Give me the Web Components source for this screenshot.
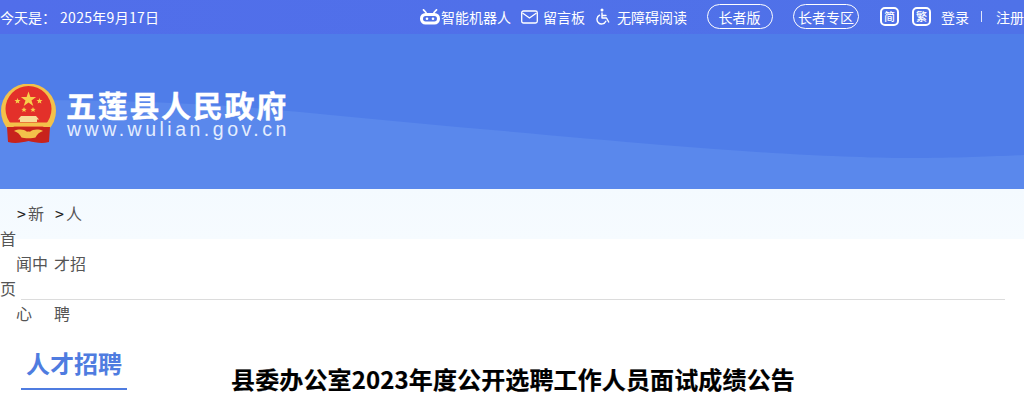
<!DOCTYPE html>
<html lang="zh-CN">
<head>
<meta charset="utf-8">
<title>县委办公室2023年度公开选聘工作人员面试成绩公告</title>
<style>
  html, body { margin: 0; padding: 0; height: 400px; overflow: hidden; background: #fff; }
  body { font-family: "Noto Sans CJK SC", "Noto Sans", sans-serif; }
</style>
</head>
<body>
<site-topbar></site-topbar>
<site-banner></site-banner>
<bread-crumbs></bread-crumbs>
<article-head></article-head>

<script>
class SiteTopbar extends HTMLElement {
  constructor() {
    super();
    this.attachShadow({mode: 'open'}).innerHTML = `
      <style>
        :host { display: flex; align-items: center; box-sizing: border-box; height: 34px; padding-bottom: 1px; background: linear-gradient(90deg, #516eea, #4f72e8); color: #fff; font-size: 14px; white-space: nowrap; overflow: hidden; }
        .date { flex: 1; }
        .date span { margin-left: 4px; letter-spacing: .3px; }
        .item { display: flex; align-items: center; }
        .robot { margin-right: 10px; }
        .mail { margin-right: 10px; }
        .access { margin-right: 20px; }
        .pill { box-sizing: border-box; height: 25px; border: 1px solid #fff; border-radius: 13px; display: flex; align-items: center; justify-content: center; width: 66px; margin-right: 20px; padding-right: 1px; }
        .pill + .pill { margin-right: 21px; padding-right: 0; }
        .tag { box-sizing: border-box; width: 19px; height: 19px; border: 2px solid #fff; border-radius: 5px; font-size: 11px; line-height: 11px; font-weight: 500; display: flex; align-items: center; justify-content: center; margin-right: 13px; }
        .tag.last { margin-right: 10px; }
        .sep { width: 1px; height: 11px; background: #dfe6fb; margin: 0 14px 0 12px; }
        svg { display: block; fill: none; stroke: #fff; }
      </style>
      <div class="date">今天是：<span>2025年9月17日</span></div>
      <div class="item robot">
        <svg width="22" height="16" viewBox="0 0 22 16" style="margin-right:0">
          <path d="M7 3.5 4.5 .8M15 3.5 17.5 .8" stroke-width="1.7" stroke-linecap="round"/>
          <rect x="1" y="4" width="20" height="11.5" rx="5.5" fill="#fff" stroke="none"/>
          <rect x="4" y="7" width="14" height="5.5" rx="2.7" fill="#4f70e8" stroke="none"/>
          <circle cx="8" cy="9.7" r="1.3" fill="#fff" stroke="none"/>
          <circle cx="14" cy="9.7" r="1.3" fill="#fff" stroke="none"/>
        </svg>智能机器人
      </div>
      <div class="item mail">
        <svg width="17" height="14" viewBox="0 0 17 14" style="margin-right:5px">
          <rect x=".7" y="1" width="15.6" height="12" rx="1.8" stroke-width="1.3"/>
          <path d="M1.5 3 8.5 8 15.5 3" stroke-width="1.3"/>
        </svg>留言板
      </div>
      <div class="item access">
        <svg width="16" height="17" viewBox="0 0 16 17" style="margin-right:6px">
          <circle cx="7" cy="2" r="1.5" fill="#fff" stroke="none"/>
          <path d="M7 5v5h4.5l2.2 4M7 7.5h4" stroke-width="1.4" stroke-linecap="round" stroke-linejoin="round"/>
          <path d="M4.6 7.2A4.6 4.6 0 1 0 10.8 13.2" stroke-width="1.4" stroke-linecap="round"/>
        </svg>无障碍阅读
      </div>
      <div class="pill">长者版</div>
      <div class="pill">长者专区</div>
      <div class="tag">简</div>
      <div class="tag last">繁</div>
      <div>登录</div>
      <div class="sep"></div>
      <div>注册</div>
    `;
  }
}

class SiteBanner extends HTMLElement {
  constructor() {
    super();
    this.attachShadow({mode: 'open'}).innerHTML = `
      <style>
        :host { display: flex; align-items: center; position: relative; height: 155px; background: #4f7de9; overflow: hidden; }
        .wave { position: absolute; inset: 0; width: 100%; height: 100%; }
        .logo { position: relative; display: flex; align-items: center; gap: 9px; margin-top: 5px; }
        .name { color: #fff; }
        h1 { margin: 0; font-size: 30px; line-height: 30px; font-weight: 700; letter-spacing: 1.7px; white-space: nowrap; -webkit-text-stroke: .4px #fff; }
        p { margin: 0 0 0 1px; font-size: 19.5px; line-height: 20px; letter-spacing: 3.5px; color: #e4edfe; white-space: nowrap; font-family: "Liberation Sans", sans-serif; }
      </style>
      <svg class="wave" viewBox="0 0 1024 155" preserveAspectRatio="none">
        <path d="M0 66C100 66 200 68 300 78C420 90 560 102 662 111C760 119 850 124 910 124C960 124 1000 122 1024 121V155H0Z" fill="#5a88ec"/>
      </svg>
      <div class="logo">
        <svg width="57" height="60" viewBox="0 0 57 60">
          <circle cx="28.5" cy="27" r="27.5" fill="#f3c14a"/>
          <circle cx="28.5" cy="25" r="23" fill="#e3302a"/>
          <path d="M28.5 7.5 30.4 13H36.1L31.5 16.4 33.3 22 28.5 18.6 23.7 22 25.5 16.4 20.9 13H26.6Z" fill="#f8cf4b"/>
          <path d="M17.5 14l.8 2 2.2.1-1.7 1.4.6 2.1-1.9-1.2-1.9 1.2.6-2.1-1.7-1.4 2.2-.1zM39.5 14l.8 2 2.2.1-1.7 1.4.6 2.1-1.9-1.2-1.900 1.2.6-2.1-1.7-1.4 2.2-.1zM24 23l.7 1.8 2 .1-1.5 1.2.5 1.9-1.7-1.1-1.7 1.1.5-1.9-1.5-1.2 2-.1zM33 23l.7 1.8 2 .1-1.5 1.2.5 1.9-1.7-1.1-1.7 1.1.5-1.9-1.5-1.2 2-.1z" fill="#f8cf4b"/>
          <path d="M21 32h15l3 3.5h-2V38H20v-2.5h-2z" fill="#f7dc97"/>
          <path d="M9 38.500h39l-1.500 4H10.500z" fill="#f3c14a"/>
          <path d="M7 43h43l-1 15C42 60 35 58.500 28.500 57 22 58.500 15 60 8 58z" fill="#c8231c"/>
          <path d="M14 47c4-2 10-2 13 .8 1-.5 2-.5 3 0 3-2.800 9-2.800 13-.8-3 1-6 3-7.500 6.500-2 1-12 1-14 0C20 50 17 48 14 47z" fill="#f3c14a"/>
        </svg>
        <div class="name">
          <h1>五莲县人民政府</h1>
          <p>www.wulian.gov.cn</p>
        </div>
      </div>
    `;
  }
}

class BreadCrumbs extends HTMLElement {
  constructor() {
    super();
    this.attachShadow({mode: 'open'}).innerHTML = `
      <style>
        :host { display: block; height: 110px; background: linear-gradient(#f4faff 0, #f6fbff 50px, #fff 50px); color: #555; font-size: 16px; line-height: 50px; }
        .rail { display: flex; align-items: center; height: 148px; }
        a { display: block; width: 16px; word-break: break-all; }
        a.col { width: 38px; }
        a.col + a.col { width: 32px; }
        b { font-weight: 400; color: #222; letter-spacing: 2px; margin-left: 1px; }
        .rule { height: 1px; background: #dcdcdc; margin: -38px 19px 0 21px; }
      </style>
      <div class="rail">
        <a>首页</a>
        <a class="col"><b>&gt;</b>新闻中心</a>
        <a class="col"><b>&gt;</b>人才招聘</a>
      </div>
      <div class="rule"></div>
    `;
  }
}

class ArticleHead extends HTMLElement {
  constructor() {
    super();
    this.attachShadow({mode: 'open'}).innerHTML = `
      <style>
        :host { display: flex; align-items: flex-start; padding: 46px 0 0 21px; }
        .side { width: 106px; height: 43px; border-bottom: 2px solid #4f7ce0; color: #4f7ce0; font-size: 24px; font-weight: 700; line-height: 36px; text-align: center; flex: none; }
        h2 { margin: 17px 0 0 104px; font-size: 24px; line-height: 34px; font-weight: 700; color: #000; white-space: nowrap; letter-spacing: .13px; -webkit-text-stroke: .2px #000; }
      </style>
      <div class="side">人才招聘</div>
      <h2>县委办公室2023年度公开选聘工作人员面试成绩公告</h2>
    `;
  }
}

customElements.define('site-topbar', SiteTopbar);
customElements.define('site-banner', SiteBanner);
customElements.define('bread-crumbs', BreadCrumbs);
customElements.define('article-head', ArticleHead);
</script>
</body>
</html>
